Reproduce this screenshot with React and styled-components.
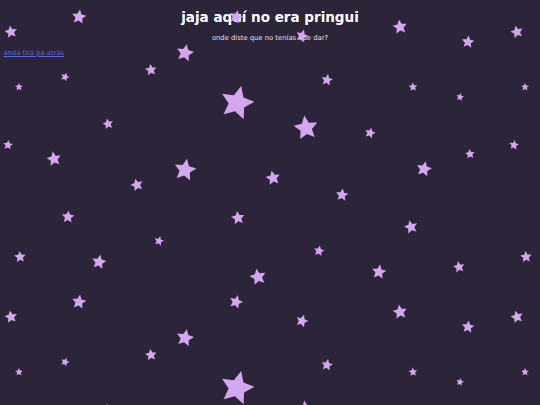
import React from 'react'
import styled, { createGlobalStyle } from 'styled-components'

const GlobalStyle = createGlobalStyle`
  html, body {
    margin: 0;
    padding: 0;
    background: #2c2539;
  }
  body {
    font-family: "DejaVu Sans", Verdana, sans-serif;
  }
`;

const Page = styled.div`
  position: relative;
  min-height: 100vh;
  padding: 0 3.4px;
  box-sizing: border-box;
  overflow: hidden;
  display: flow-root;
`;

const Title = styled.h1`
  margin: 9px 0;
  font-size: 13.5px;
  font-weight: bold;
  color: #ffffff;
  text-align: center;
`;

const Subtitle = styled.p`
  margin: 6.75px 0;
  font-size: 6.8px;
  color: #e2e0e8;
  text-align: center;
`;

const LinkRow = styled.p`
  margin: 6.75px 0;
  font-size: 6.8px;
`;

const BackLink = styled.a`
  color: #5a68d8;
  text-decoration: underline;
`;

const StarLayer = styled.svg`
  position: absolute;
  inset: 0;
  width: 100%;
  height: 100%;
  pointer-events: none;
`;

// x, y, diameter, rotation — one tile of the star field (540 x 285)
const stars = [
  [79, 17, 15, 8], [11, 32, 13, -10], [185, 53, 18, 12], [151, 70, 12, -6],
  [65, 77, 9, 20], [19, 87, 8, 0], [237, 103, 35, 14], [108, 124, 11, -12],
  [400, 27, 15, -8], [302, 36, 13, 18], [468, 42, 13, 6], [517, 32, 13, -14],
  [327, 80, 12, 10], [413, 87, 9, -4], [460, 97, 8, 12], [525, 87, 8, 0],
  [306, 128, 25, -8], [370, 133, 11, 16], [8, 145, 10, 6], [54, 159, 15, -10],
  [185, 170, 23, 10], [137, 185, 13, -16], [68, 217, 13, 4], [238, 218, 14, -8],
  [159, 241, 10, 14], [20, 257, 12, -4], [99, 262, 15, 10], [258, 277, 17, -12],
  [514, 145, 10, 8], [470, 154, 10, -6], [424, 169, 16, 12], [273, 178, 15, -10],
  [342, 195, 13, 6], [411, 227, 14, -14], [319, 251, 11, 10], [526, 257, 12, -4],
  [379, 272, 15, 8], [459, 267, 12, -10], [236, 17, 14, 16],
];

function starPoints(d) {
  const R = d / 2;
  const r = R * 0.48;
  const pts = [];
  for (let i = 0; i < 10; i++) {
    const rad = i % 2 === 0 ? R : r;
    const a = -Math.PI / 2 + (i * Math.PI) / 5;
    pts.push(`${(rad * Math.cos(a)).toFixed(2)},${(rad * Math.sin(a)).toFixed(2)}`);
  }
  return pts.join(' ');
}

function StarField() {
  return (
    <StarLayer>
      <defs>
        <pattern id="stars" width="540" height="285" patternUnits="userSpaceOnUse">
          {stars.map(([x, y, d, rot], i) => (
            <polygon
              key={i}
              points={starPoints(d)}
              transform={`translate(${x} ${y}) rotate(${rot})`}
              fill="#d4a6ef"
            />
          ))}
        </pattern>
      </defs>
      <rect width="100%" height="100%" fill="url(#stars)" />
    </StarLayer>
  );
}

export default function App() {
  return (
    <>
      <GlobalStyle />
      <Page>
        <Title>jaja aquí no era pringui</Title>
        <Subtitle>onde diste que no tenías que dar?</Subtitle>
        <LinkRow>
          <BackLink href="#">anda tira pa atrás</BackLink>
        </LinkRow>
        <StarField />
      </Page>
    </>
  );
}
